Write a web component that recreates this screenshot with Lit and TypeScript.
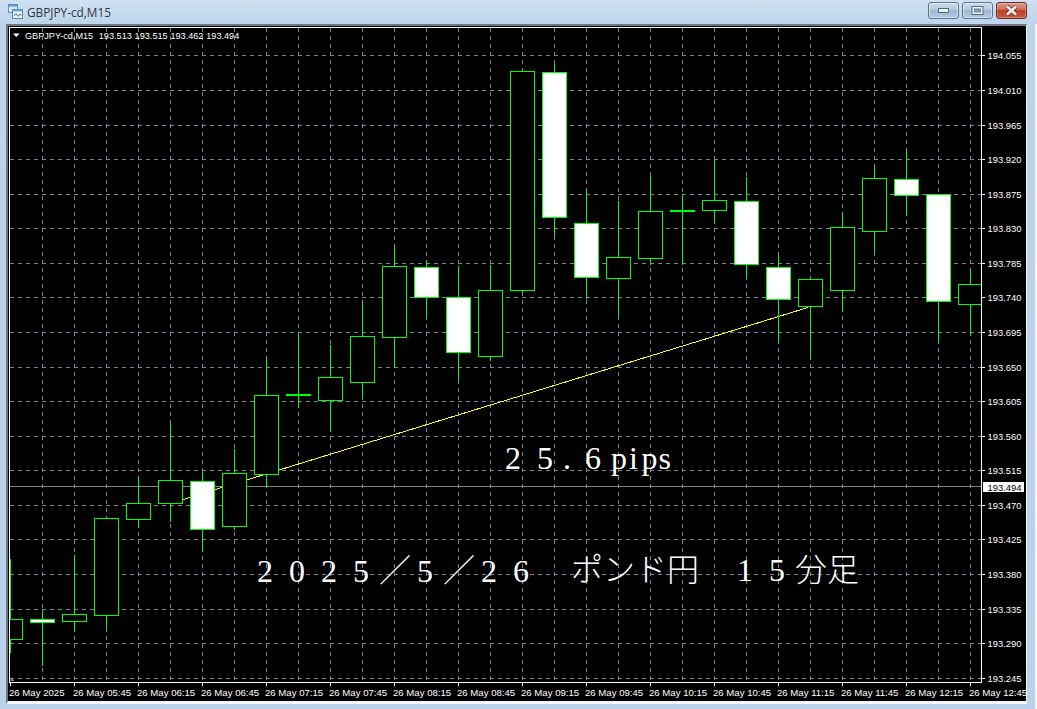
import { LitElement, html, css, svg } from "lit";
import { customElement } from "lit/decorators.js";

type Candle = [number, number, number, number, number, number];
// centre x, wick high, body top, body bottom, wick low, kind (0 hollow, 1 white, 2 flat bar)
const CANDLES: Candle[] = [
  [10, 559, 619, 639, 652, 0],
  [42, 610, 619, 622, 665, 1],
  [74, 555, 614, 621, 630, 0],
  [106, 517, 518, 615, 628, 0],
  [138, 477, 503, 519, 527, 0],
  [170, 423, 480, 503, 521, 0],
  [202, 471, 481, 529, 551, 1],
  [234, 449, 473, 526, 529, 0],
  [266, 357, 395, 474, 486, 0],
  [298, 333, 394, 395, 407, 2],
  [330, 345, 377, 400, 431, 0],
  [362, 303, 336, 382, 397, 0],
  [394, 245, 266, 337, 367, 0],
  [426, 261, 267, 297, 317, 1],
  [458, 266, 297, 352, 379, 1],
  [490, 265, 290, 356, 360, 0],
  [522, 69, 71, 290, 293, 0],
  [554, 64, 72, 217, 235, 1],
  [586, 190, 223, 277, 298, 1],
  [618, 201, 257, 278, 315, 0],
  [650, 176, 211, 258, 264, 0],
  [682, 194, 210, 211, 264, 2],
  [714, 159, 200, 210, 222, 0],
  [746, 177, 201, 264, 277, 1],
  [778, 255, 267, 299, 341, 1],
  [810, 279, 279, 306, 358, 0],
  [842, 212, 227, 290, 311, 0],
  [874, 165, 178, 231, 251, 0],
  [906, 149, 179, 195, 215, 1],
  [938, 194, 194, 301, 341, 1],
  [970, 269, 284, 304, 334, 0],
];

const PRICES: [number, string][] = [
  [55, "194.055"], [90, "194.010"], [125, "193.965"], [159, "193.920"], [194, "193.875"],
  [228, "193.830"], [263, "193.785"], [297, "193.740"], [332, "193.695"], [367, "193.650"],
  [401, "193.605"], [436, "193.560"], [470, "193.515"], [505, "193.470"], [539, "193.425"],
  [574, "193.380"], [609, "193.335"], [643, "193.290"], [678, "193.245"],
];

const TIMES = ["26 May 2025", "26 May 05:45", "26 May 06:15", "26 May 06:45", "26 May 07:15", "26 May 07:45",
  "26 May 08:15", "26 May 08:45", "26 May 09:15", "26 May 09:45", "26 May 10:15", "26 May 10:45",
  "26 May 11:15", "26 May 11:45", "26 May 12:15", "26 May 12:45"];

const VERTICALS = Array.from({ length: 30 }, (_, i) => 42 + i * 32);

@customElement("app-root")
export class AppRoot extends LitElement {
  static styles = css`
    :host { display: block; width: 1037px; height: 709px; overflow: hidden; background: #b9d1ea; }
    .window { display: flex; flex-direction: column; width: 1037px; height: 709px;
      background:
        linear-gradient(to right, transparent 1035px, #f4f8fb 1035px) 0 24px no-repeat,
        linear-gradient(#cfe1f1 0, #bdd4ea 24px, #b9d1ea 100%); }
    .titlebar { display: flex; align-items: flex-start; height: 24px; padding: 0 10px 0 8px; flex: none; }
    .appicon { width: 15px; height: 15px; margin-top: 4px; flex: none; }
    .title { font: 11.8px/24px "Open Sans", sans-serif; color: #2c3640; margin-left: 4px; flex: 1; }
    .buttons { display: flex; gap: 3px; margin-top: 2px; }
    .btn { width: 29px; height: 15px; border: 1px solid #5f7389; border-radius: 3px; box-sizing: content-box;
      display: flex; align-items: center; justify-content: center;
      box-shadow: inset 0 0 0 1px rgba(255,255,255,.45);
      background: linear-gradient(#c9dbec 0, #b5cce2 45%, #9db8d3 50%, #b0cbe4 100%); }
    .btn.close { border-color: #6b2b2b; box-shadow: inset 0 0 0 1px rgba(255,255,255,.25);
      background: linear-gradient(#dc9a8c 0, #cf6a56 45%, #bd3f27 50%, #c9593f 100%); }
    .btn svg { display: block; }
    .frame { flex: none; margin-left: 6px; width: 1021px; height: 680px; box-sizing: border-box;
      border-style: solid; border-color: #6d7782 #f4f8fb #f4f8fb #6d7782; border-width: 2px 1px 3px 2px; background: #000; }
    .chart { display: block; width: 1018px; height: 675px; background: #000; }
    .grid { stroke: #778899; stroke-width: 1; stroke-dasharray: 4 4; shape-rendering: crispEdges; }
    .axis { stroke: #fff; stroke-width: 1; shape-rendering: crispEdges; }
    .bid { stroke: #778899; stroke-width: 1; shape-rendering: crispEdges; }
    .wick { stroke: #00ff00; stroke-width: 1; shape-rendering: crispEdges; }
    .body { stroke: #00ff00; stroke-width: 1; shape-rendering: crispEdges; fill: #000; }
    .body.bear { fill: #fff; }
    .flat { fill: #00ff00; shape-rendering: crispEdges; }
    .trend { stroke: #ffff00; stroke-width: 1; fill: none; shape-rendering: crispEdges; }
    .label { font: 9.6px "Liberation Sans", sans-serif; fill: #fff; }
    .label.price { font-size: 9.4px; }
    .label.legend { font-size: 9.15px; word-spacing: 0.3px; }
    .label.dark { fill: #000; }
    .note { font: 32px "Liberation Serif", "Noto Sans CJK JP", serif; fill: #fff; }
    .note.jp { font-weight: 300; }
  `;

  private candle([c, hi, top, bot, lo, kind]: Candle) {
    return svg`
      <line class="wick" x1=${c + 0.5} x2=${c + 0.5} y1=${hi} y2=${lo + 1}></line>
      ${kind === 2
        ? svg`<rect class="flat" x=${c - 12} y=${top} width="25" height="2"></rect>`
        : svg`<rect class="body ${kind === 1 ? "bear" : ""}" x=${c - 11.5} y=${top + 0.5} width="24" height=${bot - top}></rect>`}
    `;
  }

  render() {
    return html`
      <div class="window">
        <div class="titlebar">
          <svg class="appicon" viewBox="0 0 15 15">
            <rect x="0.5" y="0.5" width="9" height="8" fill="#dceaf6" stroke="#5b93c7"></rect>
            <rect x="0.5" y="0.5" width="9" height="2" fill="#5b93c7"></rect>
            <rect x="4.5" y="5.5" width="10" height="9" fill="#fff" stroke="#4a86c0"></rect>
            <rect x="4.5" y="5.5" width="10" height="2" fill="#6aa3d5"></rect>
            <path d="M6 12 L8 9.5 L10 12.5 L12 10 L13.5 11.5" fill="none" stroke="#2d6fae" stroke-width="1"></path>
          </svg>
          <div class="title">GBPJPY-cd,M15</div>
          <div class="buttons">
            <div class="btn">
              <svg width="13" height="6" viewBox="0 0 13 6"><rect x="1.5" y="0.5" width="10" height="4" fill="#eef3f8" stroke="#56677a"></rect></svg>
            </div>
            <div class="btn">
              <svg width="13" height="9" viewBox="0 0 13 9"><rect x="1" y="0.5" width="11" height="8" fill="#eef3f8" stroke="#56677a"></rect><rect x="3.5" y="3" width="6" height="3" fill="#8ea6be" stroke="#56677a" stroke-width="0.8"></rect></svg>
            </div>
            <div class="btn close">
              <svg width="15" height="11" viewBox="0 0 15 11">
                <path d="M3 1.5 L12 9.5 M12 1.5 L3 9.5" stroke="#5c3030" stroke-width="4.2" fill="none"></path>
                <path d="M3 1.5 L12 9.5 M12 1.5 L3 9.5" stroke="#f4f0ee" stroke-width="2.6" fill="none"></path>
              </svg>
            </div>
          </div>
        </div>
        <div class="frame">
          <svg class="chart" viewBox="8 26 1018 675">
            <defs><clipPath id="plot"><rect x="10" y="28" width="971" height="654"></rect></clipPath></defs>

            ${PRICES.map(([y]) => svg`<line class="grid" x1="10" x2="981" y1=${y + 0.5} y2=${y + 0.5}></line>`)}
            ${VERTICALS.map((x) => svg`<line class="grid" x1=${x + 0.5} x2=${x + 0.5} y1="28" y2="682"></line>`)}

            <g clip-path="url(#plot)">
              <line class="trend" x1="170" y1="503.5" x2="808" y2="307.5"></line>
              <line class="bid" x1="10" x2="981" y1="486.5" y2="486.5"></line>
              ${CANDLES.map((c) => this.candle(c))}
            </g>

            <line class="axis" x1="9.5" x2="9.5" y1="27" y2="683"></line>
            <line class="axis" x1="981.5" x2="981.5" y1="27" y2="683"></line>
            <line class="axis" x1="9" x2="982" y1="27.5" y2="27.5"></line>
            <line class="axis" x1="9" x2="982" y1="682.5" y2="682.5"></line>

            ${PRICES.map(([y, t]) => svg`
              <line class="axis" x1="982" x2="985" y1=${y + 0.5} y2=${y + 0.5}></line>
              <text class="label price" x="987.5" y=${y + 4}>${t}</text>`)}
            <rect x="983" y="482" width="41" height="10" fill="#fff"></rect>
            <text class="label price dark" x="987.5" y="490.5">193.494</text>

            ${TIMES.map((t, i) => svg`
              <line class="axis" x1=${10.5 + i * 64} x2=${10.5 + i * 64} y1="683" y2="686"></line>
              <text class="label" x=${9 + i * 64} y="695.5">${t}</text>`)}

            <path d="M10.5 677 L14.5 681 L10.5 681 Z" fill="#778899"></path>
            <path d="M13 33.5 L19.5 33.5 L16.25 37 Z" fill="#fff"></path>
            <text class="label legend" x="25" y="38.5" xml:space="preserve">GBPJPY-cd,M15  193.513 193.515 193.462 193.494</text>

            <text class="note" x="505 537 563 585 611 629 641.5 658.5" y="469">25.6pips</text>
            <text class="note jp" x="257 289 321 353 379 417 443 481 513" y="581.5">2025／5／26</text>
            <text class="note jp" x="571 603 635 667" y="581">ポンド円</text>
            <text class="note jp" x="737 769 795 827" y="581">15分足</text>
          </svg>
        </div>
      </div>
    `;
  }
}
